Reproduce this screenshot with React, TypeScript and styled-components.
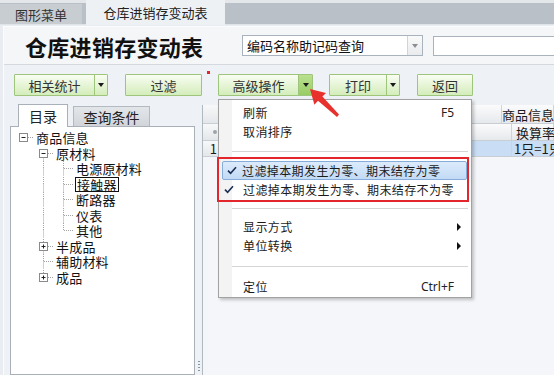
import styled, { createGlobalStyle } from 'styled-components';
import type { ReactElement } from 'react';

const GlobalStyle = createGlobalStyle`
  html, body { margin: 0; padding: 0; }
  body {
    font-family: 'Noto Sans CJK SC', 'Noto Sans', sans-serif;
    background: #eef2f6;
  }
  * { box-sizing: border-box; }
`;

const Screen = styled.div`
  position: relative;
  width: 554px;
  height: 375px;
  overflow: hidden;
  display: flex;
  flex-direction: column;
  background: #e9edf1;
  color: #1e1e1e;
`;

/* ---------- document tabs ---------- */

const TabStrip = styled.div`
  height: 25px;
  flex: 0 0 25px;
  display: flex;
  align-items: flex-end;
  background: linear-gradient(#e3e7ea 0 3px, #b9c0c7 3px 24px, #dfe4e8 24px);
`;

const DocTab = styled.div<{ $active?: boolean }>`
  height: ${p => (p.$active ? 25 : 20)}px;
  width: ${p => (p.$active ? 139 : 82)}px;
  margin: ${p => (p.$active ? '0 0 0 4px' : '0 0 1px 0')};
  display: flex;
  align-items: center;
  justify-content: center;
  font-size: 13px;
  line-height: 1;
  color: ${p => (p.$active ? '#222' : '#333')};
  background: ${p => (p.$active ? '#eef1f4' : '#c8cdd2')};
`;

/* ---------- workspace ---------- */

const Workspace = styled.div`
  flex: 1;
  margin: 1px 0 0 3px;
  border-top: 1px solid #fbfcfd;
  border-left: 1px solid #fbfcfd;
  background: #eef2f6;
  display: flex;
  flex-direction: column;
  min-height: 0;
`;

const TitleBar = styled.div`
  height: 38px;
  flex: 0 0 38px;
  display: flex;
  align-items: center;
  padding-left: 21px;
  background: #f4f6f8;
  border-bottom: 1px solid #d3d9df;
`;

const Title = styled.h1`
  flex: 0 0 217px;
  margin: 0;
  font-size: 22px;
  font-weight: 700;
  letter-spacing: 0.3px;
  line-height: 1;
  color: #111;
`;

const Combo = styled.div`
  width: 181px;
  height: 21px;
  display: flex;
  background: #fff;
  border: 1px solid #a9b3bd;
`;

const ComboText = styled.span`
  flex: 1;
  padding-left: 4px;
  font-size: 13px;
  line-height: 19px;
  color: #111;
`;

const ComboButton = styled.span`
  width: 15px;
  display: flex;
  align-items: center;
  justify-content: center;
  border-left: 1px solid #d0d5da;
  background: linear-gradient(#fafafa, #e9ebed);
`;

const DownTri = styled.i<{ $color?: string }>`
  display: block;
  width: 0;
  height: 0;
  border-left: 3.5px solid transparent;
  border-right: 3.5px solid transparent;
  border-top: 4px solid ${p => p.$color ?? '#1a1a1a'};
`;

const SearchBox = styled.div`
  flex: 1;
  height: 20px;
  margin-left: 10px;
  background: #fff;
  border: 1px solid #a9b3bd;
  border-right: none;
`;

/* ---------- toolbar ---------- */

const Toolbar = styled.div`
  flex: 0 0 38px;
  display: flex;
  align-items: flex-start;
  padding: 9px 0 0 10px;
`;

const greenFace = `linear-gradient(#f9fdf3, #e4f4d3 55%, #d4edbb)`;

const Button = styled.button<{ $w: number; $ml?: number }>`
  width: ${p => p.$w}px;
  height: 22px;
  margin-left: ${p => p.$ml ?? 0}px;
  padding: 0;
  border: 1px solid #9fc47c;
  border-radius: 1px;
  background: ${greenFace};
  font-family: inherit;
  font-size: 13px;
  line-height: 1;
  color: #333;
`;

const Split = styled.div<{ $w: number; $ml?: number }>`
  width: ${p => p.$w}px;
  height: 22px;
  margin-left: ${p => p.$ml ?? 0}px;
  display: flex;
  border: 1px solid #9fc47c;
  border-radius: 1px;
  background: ${greenFace};
`;

const SplitMain = styled.span`
  flex: 1;
  display: flex;
  align-items: center;
  justify-content: center;
  font-size: 13px;
  line-height: 1;
  color: #333;
`;

const SplitArrow = styled.span<{ $w: number; $hot?: boolean }>`
  width: ${p => p.$w}px;
  display: flex;
  align-items: center;
  justify-content: center;
  border-left: 1px solid #9fc47c;
  background: ${p => (p.$hot ? 'linear-gradient(#b9e08f, #98cc64)' : 'transparent')};
`;

/* ---------- main area ---------- */

const MainArea = styled.div`
  flex: 1;
  display: flex;
  padding-left: 6px;
  min-height: 0;
`;

const SidePanel = styled.div`
  width: 185px;
  display: flex;
  flex-direction: column;
`;

const PanelTabs = styled.div`
  height: 23px;
  flex: 0 0 23px;
  display: flex;
  align-items: flex-end;
  padding-left: 8px;
`;

const PanelTab = styled.div<{ $active?: boolean; $w: number }>`
  width: ${p => p.$w}px;
  height: ${p => (p.$active ? 23 : 20)}px;
  margin: ${p => (p.$active ? '0 0 -1px 0' : '0 0 0 5px')};
  display: flex;
  align-items: center;
  justify-content: center;
  font-size: 14px;
  line-height: 1;
  color: #222;
  background: ${p => (p.$active ? '#fff' : 'linear-gradient(#e3e6e9, #d1d5da)')};
  border: 1px solid ${p => (p.$active ? '#a9b0b8' : '#b3b9c0')};
  border-bottom: none;
  position: relative;
  z-index: ${p => (p.$active ? 1 : 0)};
`;

const TreeBox = styled.ul`
  flex: 1;
  margin: 0;
  padding: 3px 0 0 0;
  list-style: none;
  background: #fff;
  border: 1px solid #a9b0b8;
`;

const TreeRow = styled.li`
  height: 15.5px;
  display: flex;
  align-items: center;
  padding-left: 2px;
`;

const TreeLabel = styled.span<{ $focused?: boolean }>`
  margin-left: ${p => (p.$focused ? 2 : 3)}px;
  padding: 0 ${p => (p.$focused ? 1 : 0)}px;
  border: ${p => (p.$focused ? '1px solid #111' : 'none')};
  font-size: 13px;
  line-height: 13px;
  letter-spacing: 0.2px;
  color: #111;
`;

const Splitter = styled.div`
  width: 7px;
  display: flex;
  flex-direction: column;
  justify-content: flex-end;
  align-items: center;
  padding-bottom: 4px;
`;

const Grip = styled.span`
  width: 2px;
  height: 10px;
  background: repeating-linear-gradient(#8c949c 0 1px, transparent 1px 3px);
`;

const GridPanel = styled.div`
  flex: 1;
  margin-top: 2px;
  display: flex;
  flex-direction: column;
  background: #f4f6f9;
  border-left: 1px solid #b0b8c0;
`;

const GridRow = styled.div<{ $h: number; $cols: string; $head?: boolean }>`
  height: ${p => p.$h}px;
  display: grid;
  grid-template-columns: ${p => p.$cols};
  background: ${p => (p.$head ? 'linear-gradient(#fbfbfc, #e6e9ec)' : 'transparent')};
  border-bottom: 1px solid #c9ced4;
`;

const Cell = styled.div<{ $sel?: boolean; $rowHead?: boolean; $pad?: number }>`
  display: flex;
  align-items: center;
  justify-content: ${p => (p.$rowHead ? 'flex-end' : 'flex-start')};
  padding: 0 ${p => (p.$rowHead ? 1 : 0)}px 0 ${p => p.$pad ?? 0}px;
  white-space: nowrap;
  overflow: visible;
  font-size: 13px;
  line-height: 1;
  color: #1a1a1a;
  background: ${p => (p.$sel ? '#c9ddf5' : p.$rowHead ? 'linear-gradient(#f7f8f9, #e4e7ea)' : 'transparent')};
  border-right: 1px solid #cfd4da;
`;

const SortDot = styled.i`
  width: 4px;
  height: 4px;
  border-radius: 50%;
  background: #9ea4aa;
`;

/* ---------- context menu (overlay) ---------- */

const Menu = styled.div`
  position: absolute;
  left: 218px;
  top: 99px;
  width: 254px;
  height: 199px;
  padding-top: 3px;
  border: 1px solid #a2a2a2;
  background: linear-gradient(to right, #f3f3f3 0 13px, #ffffff 13px);
  box-shadow: 2px 2px 3px rgba(0, 0, 0, 0.22);
  z-index: 5;
`;

const MenuItem = styled.div<{ $hot?: boolean }>`
  height: 19px;
  display: flex;
  align-items: center;
  margin: 0 ${p => (p.$hot ? 4 : 0)}px 0 ${p => (p.$hot ? 3 : 0)}px;
  padding-right: ${p => (p.$hot ? 12 : 16)}px;
  border: 1px solid ${p => (p.$hot ? '#86acd9' : 'transparent')};
  border-radius: 2px;
  background: ${p => (p.$hot ? 'linear-gradient(#dcebfc, #c3daf5)' : 'transparent')};
  font-size: 12px;
  letter-spacing: 0.4px;
  line-height: 1;
  color: #1a1a1a;
`;

const IconSlot = styled.span<{ $w: number }>`
  width: ${p => p.$w}px;
  flex: 0 0 ${p => p.$w}px;
  display: flex;
  align-items: center;
  padding-left: 4px;
`;

const Shortcut = styled.span`
  margin-left: auto;
  font-family: 'Noto Sans', 'DejaVu Sans', sans-serif;
  font-size: 12px;
  letter-spacing: 0;
  color: #222;
`;

const SubArrow = styled.i`
  margin: 0 -7px 0 auto;
  width: 0;
  height: 0;
  border-top: 4px solid transparent;
  border-bottom: 4px solid transparent;
  border-left: 4px solid #111;
`;

const Separator = styled.div<{ $h: number }>`
  height: ${p => p.$h}px;
  display: flex;
  align-items: center;
  padding: 0 3px 0 13px;

  &::after {
    content: '';
    flex: 1;
    height: 1px;
    background: #d5d5d5;
    box-shadow: 0 1px 0 #fff;
  }
`;

/* ---------- annotations (overlay) ---------- */

const RedFrame = styled.div`
  position: absolute;
  left: 217px;
  top: 157px;
  width: 252px;
  height: 45px;
  border: 2px solid #e3262b;
  z-index: 6;
`;

const RedDot = styled.i`
  position: absolute;
  left: 207px;
  top: 71px;
  width: 3px;
  height: 3px;
  background: #e3262b;
`;

const ArrowMark = styled.svg`
  position: absolute;
  left: 300px;
  top: 84px;
  z-index: 7;
`;

/* ---------- pieces ---------- */

type Guide = { up?: boolean; down?: boolean; right?: boolean; box?: 'plus' | 'minus' };

function GuideCell({ up, down, right, box }: Guide): ReactElement {
  const stroke = '#a3a3a3';
  return (
    <svg width="20" height="15.5" viewBox="0 0 20 15.5" style={{ flex: '0 0 20px' }}>
      {up && <line x1="10.5" y1="0" x2="10.5" y2={box ? 3.5 : 7.5} stroke={stroke} strokeDasharray="1 1" />}
      {down && <line x1="10.5" y1={box ? 11.5 : 7.5} x2="10.5" y2="15.5" stroke={stroke} strokeDasharray="1 1" />}
      {right && <line x1={box ? 15 : 11} y1="7.5" x2="20" y2="7.5" stroke={stroke} strokeDasharray="1 1" />}
      {box && (
        <g>
          <rect x="6.5" y="3.5" width="8" height="8" fill="#fff" stroke="#8a8a8a" />
          <line x1="8.5" y1="7.5" x2="12.5" y2="7.5" stroke="#222" />
          {box === 'plus' && <line x1="10.5" y1="5.5" x2="10.5" y2="9.5" stroke="#222" />}
        </g>
      )}
    </svg>
  );
}

const pass: Guide = { up: true, down: true };
const branch: Guide = { up: true, down: true, right: true };
const lastBranch: Guide = { up: true, right: true };

const treeRows: { label: string; cells: Guide[]; focused?: boolean }[] = [
  { label: '商品信息', cells: [{ box: 'minus', right: true }] },
  { label: '原材料', cells: [{}, { box: 'minus', down: true, right: true }] },
  { label: '电源原材料', cells: [{}, pass, branch] },
  { label: '接触器', cells: [{}, pass, branch], focused: true },
  { label: '断路器', cells: [{}, pass, branch] },
  { label: '仪表', cells: [{}, pass, branch] },
  { label: '其他', cells: [{}, pass, lastBranch] },
  { label: '半成品', cells: [{}, { box: 'plus', up: true, down: true, right: true }] },
  { label: '辅助材料', cells: [{}, branch] },
  { label: '成品', cells: [{}, { box: 'plus', up: true, right: true }] },
];

function Check(): ReactElement {
  return (
    <svg width="10" height="9" viewBox="0 0 10 9">
      <path d="M1 4.6 L3.6 7.4 L9 1.2" fill="none" stroke="#1c2f55" strokeWidth="1.6" />
    </svg>
  );
}

function ContextMenu(): ReactElement {
  return (
    <Menu>
      <MenuItem>
        <IconSlot $w={23} />
        刷新
        <Shortcut>F5</Shortcut>
      </MenuItem>
      <MenuItem>
        <IconSlot $w={23} />
        取消排序
      </MenuItem>
      <Separator $h={20} />
      <MenuItem $hot>
        <IconSlot $w={19}>
          <Check />
        </IconSlot>
        过滤掉本期发生为零、期末结存为零
      </MenuItem>
      <MenuItem>
        <IconSlot $w={23}>
          <Check />
        </IconSlot>
        过滤掉本期发生为零、期末结存不为零
      </MenuItem>
      <Separator $h={18} />
      <MenuItem>
        <IconSlot $w={23} />
        显示方式
        <SubArrow />
      </MenuItem>
      <MenuItem>
        <IconSlot $w={23} />
        单位转换
        <SubArrow />
      </MenuItem>
      <Separator $h={22} />
      <MenuItem>
        <IconSlot $w={23} />
        定位
        <Shortcut>Ctrl+F</Shortcut>
      </MenuItem>
    </Menu>
  );
}

export default function App(): ReactElement {
  return (
    <Screen>
      <GlobalStyle />
      <TabStrip>
        <DocTab>图形菜单</DocTab>
        <DocTab $active>仓库进销存变动表</DocTab>
      </TabStrip>

      <Workspace>
        <TitleBar>
          <Title>仓库进销存变动表</Title>
          <Combo>
            <ComboText>编码名称助记码查询</ComboText>
            <ComboButton>
              <DownTri $color="#8a8f94" />
            </ComboButton>
          </Combo>
          <SearchBox />
        </TitleBar>

        <Toolbar>
          <Split $w={94}>
            <SplitMain>相关统计</SplitMain>
            <SplitArrow $w={13}>
              <DownTri />
            </SplitArrow>
          </Split>
          <Button $w={77} $ml={17}>过滤</Button>
          <Split $w={95} $ml={16}>
            <SplitMain>高级操作</SplitMain>
            <SplitArrow $w={14} $hot>
              <DownTri />
            </SplitArrow>
          </Split>
          <Split $w={71} $ml={16}>
            <SplitMain>打印</SplitMain>
            <SplitArrow $w={13}>
              <DownTri />
            </SplitArrow>
          </Split>
          <Button $w={56} $ml={17}>返回</Button>
        </Toolbar>

        <MainArea>
          <SidePanel>
            <PanelTabs>
              <PanelTab $active $w={50}>目录</PanelTab>
              <PanelTab $w={77}>查询条件</PanelTab>
            </PanelTabs>
            <TreeBox>
              {treeRows.map(row => (
                <TreeRow key={row.label}>
                  {row.cells.map((c, i) => (
                    <GuideCell key={i} {...c} />
                  ))}
                  <TreeLabel $focused={row.focused}>{row.label}</TreeLabel>
                </TreeRow>
              ))}
            </TreeBox>
          </SidePanel>

          <Splitter>
            <Grip />
          </Splitter>

          <GridPanel>
            <GridRow $h={19} $cols="16px 1fr 52px" $head>
              <Cell $rowHead />
              <Cell />
              <Cell>商品信息</Cell>
            </GridRow>
            <GridRow $h={17} $cols="16px 1fr 42px" $head>
              <Cell $rowHead>
                <SortDot />
              </Cell>
              <Cell />
              <Cell $pad={4}>换算率</Cell>
            </GridRow>
            <GridRow $h={16} $cols="16px 1fr 42px">
              <Cell $rowHead>1</Cell>
              <Cell $sel />
              <Cell $sel $pad={2}>
                1只=1只
              </Cell>
            </GridRow>
          </GridPanel>
        </MainArea>
      </Workspace>

      <RedDot />
      <ContextMenu />
      <RedFrame />
      <ArrowMark width="45" height="40" viewBox="0 0 45 40">
        <polygon
          points="10,5 26,9 22.4,12.6 39,30.6 37,33 18,16.8 14.4,20.8"
          fill="#e8302c"
        />
      </ArrowMark>
    </Screen>
  );
}
